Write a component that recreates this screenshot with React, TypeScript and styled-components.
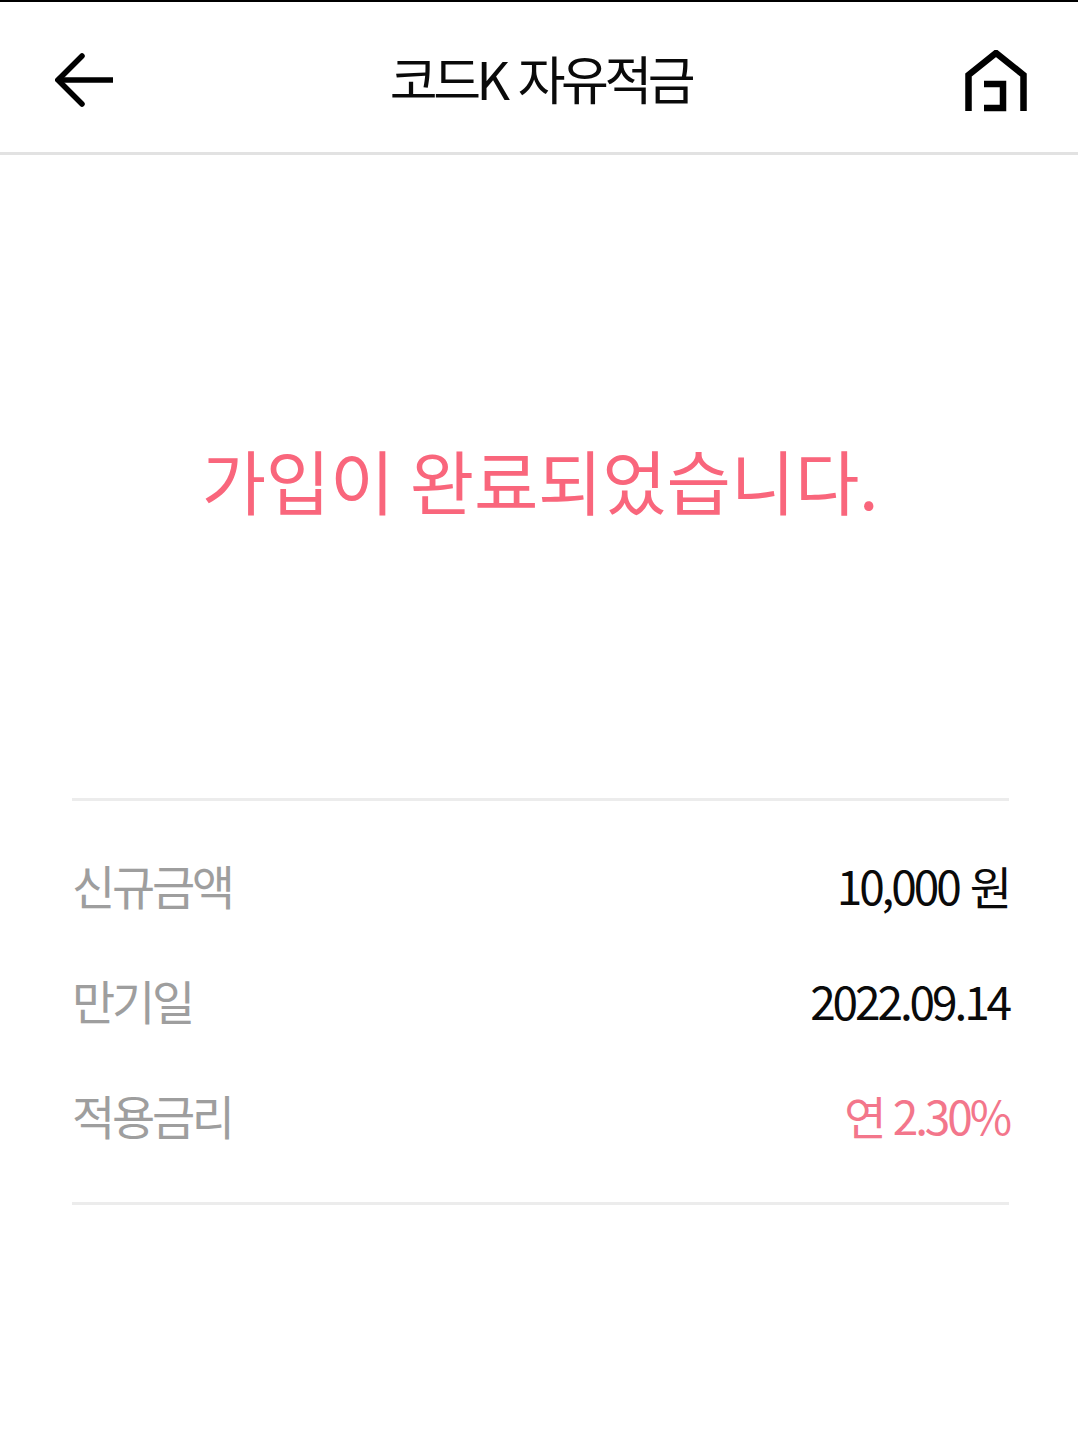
import styled, { createGlobalStyle } from "styled-components";

const GlobalStyle = createGlobalStyle`
  html, body {
    margin: 0;
    padding: 0;
    background: #ffffff;
  }
  body {
    font-family: "Noto Sans CJK KR", "Noto Sans", sans-serif;
  }
`;

const Screen = styled.div`
  width: 1078px;
  height: 1437px;
  display: flex;
  flex-direction: column;
  overflow: hidden;
  background: #ffffff;
  border-top: 2px solid #000000;
  box-sizing: border-box;
`;

const Header = styled.header`
  height: 153px;
  flex-shrink: 0;
  box-sizing: border-box;
  border-bottom: 3px solid #e2e2e2;
  display: flex;
  align-items: center;
  justify-content: space-between;
  padding: 7px 51px 0 55px;
`;

const Title = styled.h1`
  margin: 0 0 6px;
  font-size: 52px;
  font-weight: 400;
  letter-spacing: -4.5px;
  word-spacing: 5px;
  color: #0a0a0a;
  line-height: 1;
`;

const IconButton = styled.button`
  border: 0;
  background: none;
  padding: 0;
  display: flex;
  color: #000000;
`;

const Message = styled.div`
  height: 643px;
  flex-shrink: 0;
  display: flex;
  align-items: center;
  justify-content: center;
  font-size: 70px;
  font-weight: 400;
  color: #f9667c;
  letter-spacing: -0.2px;
  padding: 6px 0 0 2px;
  box-sizing: border-box;
`;

const Summary = styled.dl`
  margin: 0 69px 0 72px;
  padding: 26px 0 0;
  height: 407px;
  box-sizing: border-box;
  border-top: 3px solid #ececec;
  border-bottom: 3px solid #ececec;
  display: flex;
  flex-direction: column;
`;

const Row = styled.div`
  height: 115px;
  display: flex;
  align-items: center;
  justify-content: space-between;
`;

const Label = styled.dt`
  font-size: 47px;
  letter-spacing: -3.3px;
  color: #9e9e9e;
`;

const Value = styled.dd<{ $accent?: boolean }>`
  margin: 0;
  font-size: 46px;
  letter-spacing: -3.1px;
  word-spacing: ${(p) => (p.$accent ? "2px" : "4px")};
  color: ${(p) => (p.$accent ? "#f3768b" : "#0a0a0a")};
`;

export default function App() {
  return (
    <>
      <GlobalStyle />
      <Screen>
        <Header>
          <IconButton aria-label="뒤로">
            <svg width="61" height="56" viewBox="0 0 61 56" fill="none" stroke="currentColor" strokeWidth="5.5" strokeLinecap="round" strokeLinejoin="miter">
              <path d="M27 3 L3 27 L27 51" />
              <path d="M4 27 H58" strokeLinecap="butt" />
            </svg>
          </IconButton>
          <Title>코드K 자유적금</Title>
          <IconButton aria-label="홈">
            <svg width="62" height="62" viewBox="0 0 62 62" fill="none" stroke="currentColor" strokeWidth="6.5">
              <path d="M3.5 61 V25 L31 3 L58.5 25 V61" />
              <path d="M19 34 H38 V58 H19" />
            </svg>
          </IconButton>
        </Header>
        <Message>가입이 완료되었습니다.</Message>
        <Summary>
          <Row>
            <Label>신규금액</Label>
            <Value>10,000 원</Value>
          </Row>
          <Row>
            <Label>만기일</Label>
            <Value>2022.09.14</Value>
          </Row>
          <Row>
            <Label>적용금리</Label>
            <Value $accent>연 2.30%</Value>
          </Row>
        </Summary>
      </Screen>
    </>
  );
}
